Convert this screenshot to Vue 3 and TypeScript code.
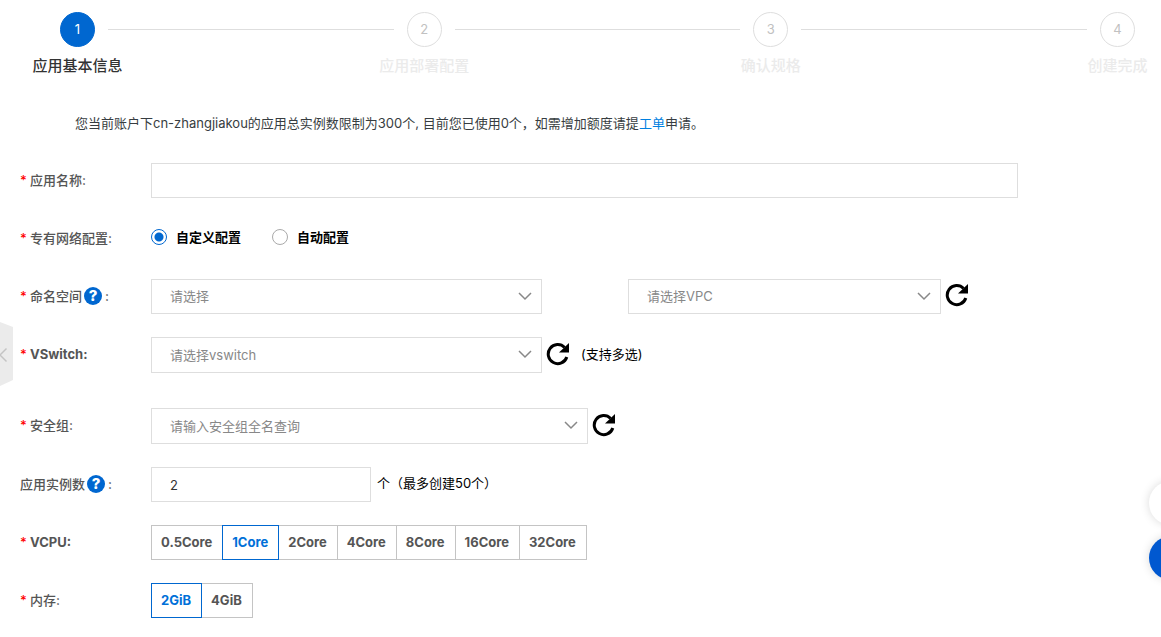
<script setup lang="ts">
import { ref } from 'vue'

const steps: string[] = ['应用基本信息', '应用部署配置', '确认规格', '创建完成']
const currentStep = 0

const cpuOptions: string[] = ['0.5Core', '1Core', '2Core', '4Core', '8Core', '16Core', '32Core']
const memoryOptions: string[] = ['2GiB', '4GiB']

const appName = ref('')
const network = ref<'custom' | 'auto'>('custom')
const namespace = ref('')
const vpc = ref('')
const vswitch = ref('')
const securityGroup = ref('')
const instances = ref('2')
const cpu = ref('1Core')
const memory = ref('2GiB')
</script>

<template>
  <main class="page">
    <ol class="steps">
      <template v-for="(step, i) in steps" :key="step">
        <li v-if="i > 0" class="line" aria-hidden="true"></li>
        <li class="step" :class="{ active: i === currentStep }">
          <span class="dot">{{ i + 1 }}</span>
          <span class="step-title">{{ step }}</span>
        </li>
      </template>
    </ol>

    <p class="notice">您当前账户下cn-zhangjiakou的应用总实例数限制为300个, 目前您已使用0个，如需增加额度请提<a href="#">工单</a>申请。</p>

    <form class="form" @submit.prevent>
      <div class="row">
        <label class="label required" for="app-name">应用名称:</label>
        <div class="field"><input id="app-name" v-model="appName" class="box full" type="text" /></div>
      </div>

      <div class="row" role="radiogroup" aria-labelledby="network-label">
        <span id="network-label" class="label required">专有网络配置:</span>
        <div class="field radios">
          <label class="radio"><input v-model="network" type="radio" name="network" value="custom" />自定义配置</label>
          <label class="radio"><input v-model="network" type="radio" name="network" value="auto" />自动配置</label>
        </div>
      </div>

      <div class="row">
        <span class="label required">
          <label for="namespace">命名空间</label><button class="help" type="button" aria-label="命名空间说明">?</button>:
        </span>
        <div class="field">
          <div class="select medium">
            <select id="namespace" v-model="namespace" class="box"><option value="">请选择</option></select>
            <svg class="chevron" viewBox="0 0 14 9"><path d="M1 1l6 6 6-6" /></svg>
          </div>
          <div class="select vpc">
            <select v-model="vpc" class="box" aria-label="VPC"><option value="">请选择VPC</option></select>
            <svg class="chevron" viewBox="0 0 14 9"><path d="M1 1l6 6 6-6" /></svg>
          </div>
          <button class="refresh" type="button" aria-label="刷新VPC">
            <svg viewBox="0 0 24 24"><path class="arc" d="M18.6 5.5A9.500 9.500 0 1 0 20.800 15" /><path class="head" d="M23 1v9.500h-10z" /></svg>
          </button>
        </div>
      </div>

      <div class="row apart">
        <label class="label required latin" for="vswitch">VSwitch:</label>
        <div class="field">
          <div class="select medium tall">
            <select id="vswitch" v-model="vswitch" class="box"><option value="">请选择vswitch</option></select>
            <svg class="chevron" viewBox="0 0 14 9"><path d="M1 1l6 6 6-6" /></svg>
          </div>
          <button class="refresh" type="button" aria-label="刷新VSwitch">
            <svg viewBox="0 0 24 24"><path class="arc" d="M18.6 5.5A9.500 9.500 0 1 0 20.800 15" /><path class="head" d="M23 1v9.500h-10z" /></svg>
          </button>
          <span class="hint">(支持多选)</span>
        </div>
      </div>

      <div class="row">
        <label class="label required" for="security">安全组:</label>
        <div class="field">
          <div class="select wide tall">
            <select id="security" v-model="securityGroup" class="box"><option value="">请输入安全组全名查询</option></select>
            <svg class="chevron" viewBox="0 0 14 9"><path d="M1 1l6 6 6-6" /></svg>
          </div>
          <button class="refresh" type="button" aria-label="刷新安全组">
            <svg viewBox="0 0 24 24"><path class="arc" d="M18.6 5.5A9.500 9.500 0 1 0 20.800 15" /><path class="head" d="M23 1v9.500h-10z" /></svg>
          </button>
        </div>
      </div>

      <div class="row">
        <span class="label">
          <label for="instances">应用实例数</label><button class="help" type="button" aria-label="应用实例数说明">?</button>:
        </span>
        <div class="field">
          <input id="instances" v-model="instances" class="box count" type="text" inputmode="numeric" />
          <span class="unit">个（最多创建50个）</span>
        </div>
      </div>

      <div class="row" role="group" aria-labelledby="cpu-label">
        <span id="cpu-label" class="label required latin">VCPU:</span>
        <div class="field">
          <button v-for="o in cpuOptions" :key="o" type="button" class="option" :class="{ chosen: o === cpu }" :aria-pressed="o === cpu" @click="cpu = o">{{ o }}</button>
        </div>
      </div>

      <div class="row" role="group" aria-labelledby="memory-label">
        <span id="memory-label" class="label required">内存:</span>
        <div class="field">
          <button v-for="o in memoryOptions" :key="o" type="button" class="option" :class="{ chosen: o === memory }" :aria-pressed="o === memory" @click="memory = o">{{ o }}</button>
        </div>
      </div>
    </form>

    <button class="collapse" type="button" aria-label="展开菜单">
      <svg viewBox="0 0 13 64"><path class="tab" d="M0 0l13 5v53L0 64z" /><path class="arrow" d="M6.500 26.500L0 33l6.500 6.500" /></svg>
    </button>
    <div class="floats">
      <button class="float" type="button" aria-label="工具"></button>
      <button class="float blue" type="button" aria-label="咨询"></button>
    </div>
  </main>
</template>

<style>
body {
  background: #fff;
}
</style>

<style scoped>
.page,
.page button,
.page input,
.page select {
  font-family: Inter, 'Noto Sans CJK SC', sans-serif;
  font-size: 13px;
  box-sizing: border-box;
}
.page {
  padding: 12px 0 19px;
  line-height: 20px;
  color: #333;
}
.steps {
  display: flex;
  margin: 0;
  padding: 0 26px 0 60px;
  list-style: none;
}
.step {
  display: flex;
  flex: none;
  flex-direction: column;
  align-items: center;
  gap: 9px;
  width: 35px;
}
.dot {
  box-sizing: border-box;
  width: 35px;
  height: 35px;
  border: 1px solid #dedede;
  border-radius: 50%;
  line-height: 33px;
  text-align: center;
  color: #c1c1c1;
}
.step-title {
  font-size: 15px;
  font-weight: 500;
  white-space: nowrap;
  color: #ebebeb;
}
.active .dot {
  border-color: #0067d0;
  background: #0067d0;
  color: #fff;
}
.active .step-title {
  color: #333;
}
.line {
  flex: 1;
  height: 1px;
  margin: 17px 13px 0;
  background: #dedede;
}
.notice {
  margin: 37px 0 30px;
  padding-left: 75px;
  color: #373d41;
}
.notice a {
  color: #0080e0;
  text-decoration: none;
}
.form {
  margin: 0 143px 0 20px;
}
.row {
  display: flex;
  align-items: center;
  min-height: 35px;
  margin-bottom: 23px;
}
.row.apart {
  margin-bottom: 35px;
}
.row:last-child {
  margin-bottom: 0;
}
.label {
  display: flex;
  flex: none;
  align-items: center;
  width: 131px;
  padding-bottom: 2px;
  font-weight: 500;
  color: #555;
}
.latin {
  font-weight: 700;
}
.required::before {
  content: '*';
  width: 10px;
  color: #f00;
  font-weight: 500;
}
.field {
  display: flex;
  flex: 1;
  align-items: center;
  min-width: 0;
}
.box {
  height: 35px;
  margin: 0;
  padding: 0 18px;
  border: 1px solid #dedede;
  border-radius: 0;
  outline: none;
  background: #fff;
  color: #333;
}
.full {
  width: 100%;
}
.count {
  width: 220px;
}
.select {
  display: flex;
  position: relative;
  flex: none;
}
.select .box {
  width: 100%;
  padding-bottom: 1px;
  appearance: none;
  color: #888;
}
.tall .box {
  height: 36px;
}
.medium {
  width: 45.1%;
}
.wide {
  width: 50.4%;
}
.vpc {
  width: 36.1%;
  margin-left: 86px;
}
.chevron {
  position: absolute;
  top: 50%;
  right: 10px;
  width: 14px;
  height: 9px;
  margin-top: -5px;
  fill: none;
  stroke: #888;
  stroke-width: 1.5;
  pointer-events: none;
}
.refresh {
  flex: none;
  width: 24px;
  height: 24px;
  margin: 0 0 3px 4px;
  padding: 0;
  border: 0;
  background: none;
}
.refresh svg {
  display: block;
}
.arc {
  fill: none;
  stroke: #000;
  stroke-width: 3;
}
.head {
  fill: #000;
}
.hint {
  margin-left: 11px;
  padding-bottom: 2px;
  color: #000;
}
.unit {
  margin-left: 6px;
  padding-bottom: 4px;
  color: #000;
}
.page .help {
  width: 18px;
  height: 18px;
  margin: 0 3px 0 2px;
  padding: 0;
  border: 0;
  border-radius: 50%;
  background: #0067d0;
  color: #fff;
  font-size: 15px;
  line-height: 18px;
  font-weight: 800;
}
.radios {
  gap: 31px;
}
.radio {
  display: flex;
  align-items: center;
  padding-bottom: 4px;
  font-weight: 600;
  color: #000;
}
.radio input {
  width: 16px;
  height: 16px;
  margin: 0 9px 0 0;
  border: 1px solid #aaa;
  border-radius: 50%;
  appearance: none;
}
.radio input:checked {
  border-color: #0067d0;
  background: radial-gradient(circle, #0067d0 4px, #fff 5px);
}
.page .option {
  height: 35px;
  margin: 0 0 0 -1px;
  padding: 0 10px 1px 9px;
  border: 1px solid #c4c4c4;
  background: #fff;
  color: #555;
  font-weight: 700;
}
.page .option:first-child {
  margin-left: 0;
}
.page .option.chosen {
  position: relative;
  border-color: #0067d0;
  color: #0070d8;
}
.collapse {
  position: fixed;
  top: 322px;
  left: 0;
  width: 13px;
  height: 64px;
  padding: 0;
  border: 0;
  background: none;
}
.collapse svg {
  display: block;
}
.tab {
  fill: #ebebeb;
}
.arrow {
  fill: none;
  stroke: #c4c4c4;
  stroke-width: 1.5;
}
.floats {
  display: flex;
  position: fixed;
  right: 0;
  bottom: 47px;
  flex-direction: column;
  gap: 11px;
  width: 12px;
  padding: 10px 0 10px 20px;
  overflow: hidden;
}
.float {
  flex: none;
  width: 44px;
  height: 44px;
  padding: 0;
  border: 0;
  border-radius: 50%;
  background: #fff;
  box-shadow: 0 0 10px rgba(0, 0, 0, 0.15);
}
.float.blue {
  background: #0058d0;
}
</style>
